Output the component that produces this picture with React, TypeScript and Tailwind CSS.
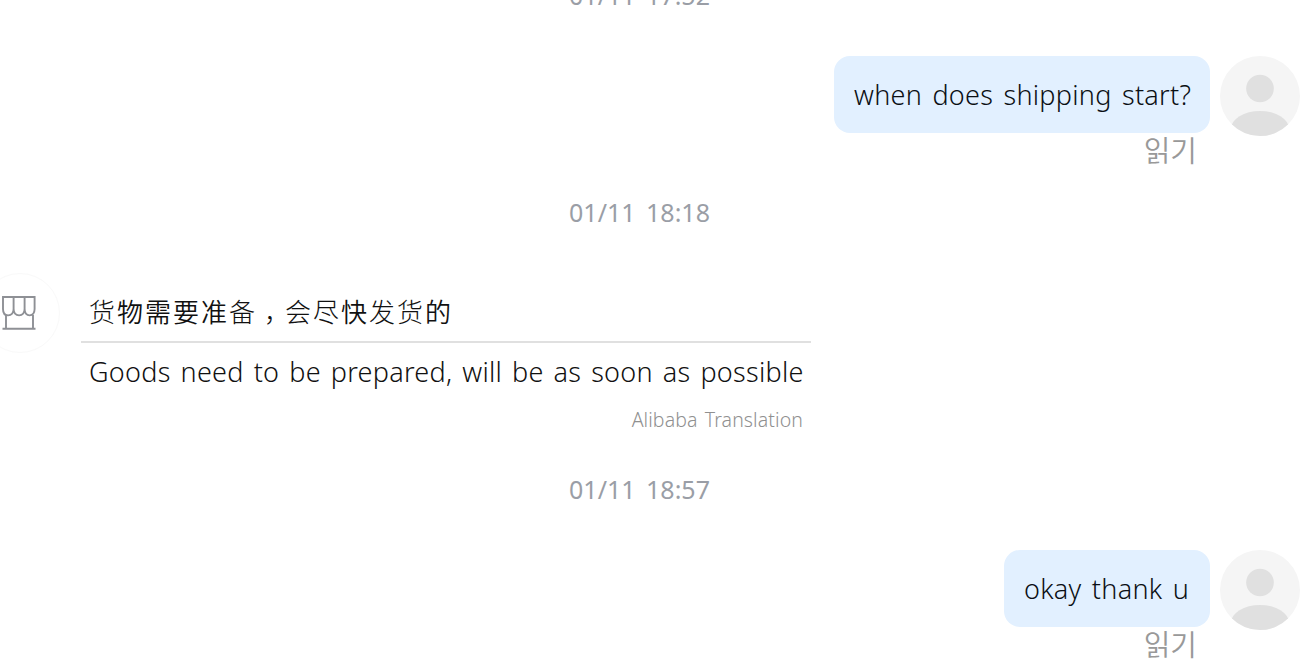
import React from 'react';

interface OutgoingMessageProps {
  text: string;
  bubbleClass: string;
}

const Avatar: React.FC = () => (
  <svg className="w-20 h-20 shrink-0" viewBox="0 0 80 80">
    <defs>
      <clipPath id="avatar-circle">
        <circle cx="40" cy="40" r="40" />
      </clipPath>
    </defs>
    <circle cx="40" cy="40" r="40" fill="#f5f5f5" />
    <g clipPath="url(#avatar-circle)" fill="#e0e0e0">
      <circle cx="40" cy="32.5" r="13.8" />
      <ellipse cx="40" cy="73" rx="29" ry="18" />
    </g>
  </svg>
);

const StoreIcon: React.FC = () => (
  <svg className="w-9 h-9" viewBox="0 0 36 36" fill="none" stroke="#8e9095" strokeWidth="1.9">
    <path d="M2 1h31.6v12c0 3.8-2 6.4-5 6.4s-5-2.6-5-6.4c0 3.8-2.2 6.4-5.5 6.4s-5.5-2.6-5.5-6.4c0 3.8-2.2 6.4-5.5 6.4s-5.1-2.6-5.1-6.4z" />
    <path d="M12.6 1v12M23.6 1v12M5 19v13.5M32 19v13.5M1.5 32.8h33" />
  </svg>
);

const DateLabel: React.FC<{ date: string }> = ({ date }) => (
  <div className="h-10 w-[1279px] pt-0.5 flex items-center justify-center text-[25px] font-[370] [word-spacing:4px] text-[#9a9ea6] whitespace-nowrap">
    {date}
  </div>
);

const OutgoingMessage: React.FC<OutgoingMessageProps> = ({ text, bubbleClass }) => (
  <div className="flex justify-end gap-2.5 pr-1 h-[114px]">
    <div className="flex flex-col items-end">
      <div className={`h-[76.5px] shrink-0 rounded-2xl bg-[#e2f0ff] pl-5 pt-px flex items-center text-[27px] font-[340] tracking-[0.28px] [word-spacing:3px] text-[#0b0f14] whitespace-nowrap ${bubbleClass}`}>
        {text}
      </div>
      <div className="mr-[13px] -mt-0.5 h-9 leading-9 text-[29px] text-[#999] font-['Noto_Sans_CJK_KR',sans-serif] font-[350]">읽기</div>
    </div>
    <Avatar />
  </div>
);

const original = [
  { text: '货', thin: true },
  { text: '物需要准', thin: false },
  { text: '备', thin: true },
  { text: '，', comma: true },
  { text: '会尽', thin: true },
  { text: '快', thin: false },
  { text: '发货', thin: true },
  { text: '的', thin: false },
];

const App: React.FC = () => {
  return (
    <div className="w-[1304px] h-[670px] overflow-hidden bg-white font-['Noto_Sans','Noto_Sans_CJK_KR',sans-serif]">
      <div className="-mt-[25px]">
        <DateLabel date="01/11 17:52" />
      </div>
      <div className="pt-[41px]">
        <OutgoingMessage text="when does shipping start?" bubbleClass="w-[376px]" />
      </div>
      <div className="pt-[22px]">
        <DateLabel date="01/11 18:18" />
      </div>

      <div className="flex mt-[41px] h-[165px]">
        <div className="-ml-5 w-20 h-20 shrink-0 rounded-full border border-[#f9f9f9] flex items-center justify-center pt-px pr-0.5">
          <StoreIcon />
        </div>
        <div className="ml-[21px] w-[730px]">
          <div className="h-[70px] pl-2 pt-[18px] border-b-2 border-[#e0e0e0] text-[26px] tracking-[2px] leading-[40px] text-[#111] font-['Noto_Sans_CJK_SC',sans-serif] whitespace-nowrap">
            {original.map((part, i) => (
              <span
                key={i}
                className={part.comma ? 'pl-[7px] tracking-[-5px] font-light' : part.thin ? 'font-extralight' : 'font-[350]'}
              >
                {part.text}
              </span>
            ))}
          </div>
          <div className="h-[58px] pl-2 pt-px flex items-center text-[27px] font-[340] tracking-[0.28px] [word-spacing:2.6px] text-[#111] whitespace-nowrap">
            Goods need to be prepared, will be as soon as possible
          </div>
          <div className="h-9 pr-2 pt-px flex items-center justify-end text-[19.5px] font-[340] tracking-[0.1px] [word-spacing:2px] text-[#909090]">
            Alibaba Translation
          </div>
        </div>
      </div>

      <div className="pt-[31px]">
        <DateLabel date="01/11 18:57" />
      </div>
      <div className="pt-[41px]">
        <OutgoingMessage text="okay thank u" bubbleClass="w-[206px]" />
      </div>
    </div>
  );
};

export default App;
